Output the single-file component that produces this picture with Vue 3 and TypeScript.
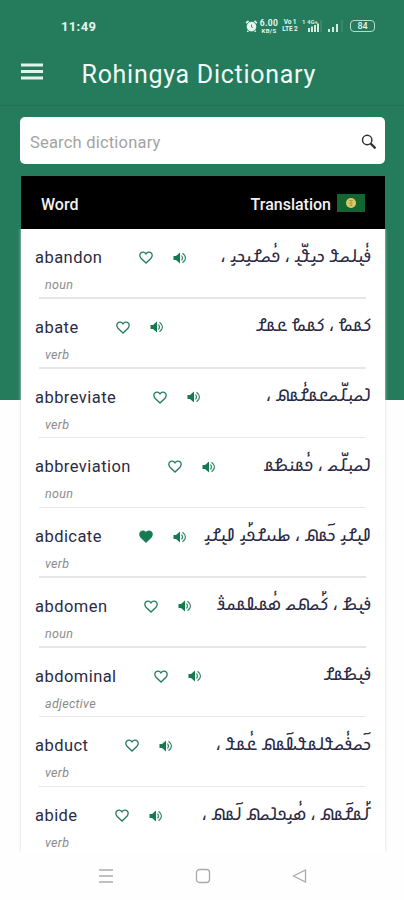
<script setup lang="ts">
interface Entry {
  word: string
  kind: string
  translation: string
  favourite?: boolean
}

const entries: Entry[] = [
  { word: 'abandon', kind: 'noun', translation: '𐴉𐴥𐴠𐴓𐴝𐴘 𐴊𐴞𐴘𐴧𐴠 ، 𐴏𐴥𐴝𐴌𐴞𐴊𐴞 ،' },
  { word: 'abate', kind: 'verb', translation: '𐴈𐴡𐴔 ، 𐴈𐴡𐴔 𐴒𐴡𐴌' },
  { word: 'abbreviate', kind: 'verb', translation: '𐴁𐴝𐴙𐴄𐴧𐴝𐴒𐴡𐴌𐴥𐴡𐴕 ،' },
  { word: 'abbreviation', kind: 'noun', translation: '𐴁𐴝𐴙𐴄𐴧𐴝 ، 𐴏𐴥𐴡𐴣𐴍𐴡' },
  { word: 'abdicate', kind: 'verb', favourite: true, translation: '𐴀𐴠𐴌𐴞 𐴊𐴦𐴡𐴕 ، 𐴋𐴟𐴌𐴏𐴤𐴞 𐴀𐴠𐴌𐴞' },
  { word: 'abdomen', kind: 'noun', translation: '𐴉𐴠𐴍 ، 𐴈𐴤𐴝𐴕𐴝 𐴇𐴥𐴡𐴎𐴡𐴔𐴜' },
  { word: 'abdominal', kind: 'adjective', translation: '𐴉𐴠𐴍𐴡𐴌' },
  { word: 'abduct', kind: 'verb', translation: '𐴊𐴦𐴝𐴉𐴥𐴝𐴘𐴓𐴡𐴘𐴎𐴦𐴡𐴕 𐴒𐴥𐴡𐴘 ،' },
  { word: 'abide', kind: 'verb', translation: '𐴄𐴤𐴡𐴌𐴦𐴡𐴕 ، 𐴇𐴥𐴞𐴏𐴁𐴝𐴕 𐴓𐴦𐴡𐴕 ،' }
]
</script>

<template>
  <main class="screen">
    <div class="status">
      <span class="clock">11:49</span>
      <div class="indicators">
        <svg class="alarm" viewBox="0 0 14 14"><circle cx="7" cy="7.7" r="5.2" /><path class="ears" d="M1.2 3.8 3.8 1.5M12.8 3.8 10.2 1.5M3.5 12l-1 1.3M10.5 12l1 1.3" /><path class="hand" d="M7 5.500v2.500l1.500 1" /></svg>
        <span class="speed"><b>6.00</b><b>KB/S</b></span>
        <span class="speed volte"><b>Vo 1</b><b>LTE 2</b></span>
        <svg class="signal one" viewBox="0 0 20 14"><text x="0" y="5">1 4G+</text><path d="M6 9h2v4H6zM9 7.500h2V13H9zM12 6h2v7h-2zM15 4.500h2V13h-2z" /><path class="dim" d="M18 1h2v12h-2z" /></svg>
        <svg class="signal two" viewBox="0 0 16 14"><path d="M0 10h2v3H0zM4 8h2v5H4zM8 5h2v8H8z" /><path class="dim" d="M13 1h2v12h-2z" /></svg>
        <span class="battery">84</span>
      </div>
    </div>

    <header class="bar">
      <svg class="menu" viewBox="0 0 22 18"><path d="M0 2h22M0 8.500h22M0 15h22" /></svg>
      <h1>Rohingya Dictionary</h1>
    </header>

    <label class="search">
      <input type="text" placeholder="Search dictionary" />
      <svg viewBox="0 0 16 16"><circle cx="6.2" cy="6" r="4.7" /><path d="m9.7 9.6 4.8 4.8" /></svg>
    </label>

    <section class="card">
      <div class="head">
        <span>Word</span>
        <span class="to">Translation
          <svg viewBox="0 0 28 18"><rect width="28" height="18" /><circle cx="14" cy="9" r="5" /><path d="M12 6.5h4M11.5 9H16M12.5 11.5h3M14 6v6" /></svg>
        </span>
      </div>
      <ul>
        <li v-for="e in entries" :key="e.word">
          <div class="line">
            <span class="word">{{ e.word }}</span>
            <svg class="heart" :class="{ on: e.favourite }" viewBox="0 0 14 13"><path d="M7 12 2 7.2C.4 5.5.5 3.1 1.8 1.9c1.6-1.4 4-.9 5.2 1 1.2-1.9 3.600-2.400 5.200-1C13.500 3.100 13.600 5.500 12 7.200Z" /></svg>
            <svg class="sound" viewBox="0 0 14 12"><path class="box" d="M.5 4H3l4-3.500v11L3 8H.5z" /><path class="wave" d="M8.500 3.500q2 2.500 0 5M9.500 1.200q6 4.800 0 9.600" /></svg>
            <span class="translation" dir="rtl" lang="rhg">{{ e.translation }}</span>
          </div>
          <em>{{ e.kind }}</em>
        </li>
      </ul>
    </section>

    <nav class="keys">
      <svg viewBox="0 0 16 16"><path d="M1 2h14M1 8h14M1 14h14" /></svg>
      <svg viewBox="0 0 16 16"><rect x="1.500" y="1.500" width="13" height="13" rx="3" /></svg>
      <svg viewBox="0 0 16 16"><path d="M14.500 2v12L2.500 8Z" /></svg>
    </nav>
  </main>
</template>

<style>
body { background: #fefefe; }
</style>

<style scoped>
* { box-sizing: border-box; }
.screen {
  width: 404px;
  height: 900px;
  overflow: hidden;
  display: flex;
  flex-direction: column;
  font-family: Roboto, "Noto Sans", sans-serif;
  background: linear-gradient(#247c5c 400px, #fefefe 400px);
}
.status {
  flex: none;
  height: 40px;
  padding: 12px 29px 0 61px;
  display: flex;
  align-items: center;
  justify-content: space-between;
  color: #e6f5ee;
}
.clock { font: 700 13px Roboto, sans-serif; letter-spacing: .35px; }
.indicators { display: flex; align-items: center; }
.alarm { width: 13px; height: 14px; margin-right: 1px; fill: #e6f5ee; }
.ears { stroke: #e6f5ee; stroke-width: 1.800; }
.hand { fill: none; stroke: #247c5c; stroke-width: .900; }
.speed { width: 20px; margin-right: 3px; display: flex; flex-direction: column; align-items: center; }
.speed b { font-size: 8.500px; line-height: 8px; letter-spacing: .3px; }
.speed b + b { font-size: 6px; line-height: 7px; }
.speed.volte { width: 16px; margin-right: 4px; }
.speed.volte b { font-size: 6.500px; line-height: 7px; white-space: nowrap; letter-spacing: -.1px; }
.signal { height: 14px; fill: #d5eae1; overflow: visible; }
.signal text { font: 700 6px Roboto, sans-serif; }
.dim { fill: #3a8769; }
.one { width: 20px; margin-right: 6px; }
.two { width: 16px; margin-right: 6px; }
.battery {
  width: 25px; height: 12px; border: 1px solid #b5dccb; border-radius: 4px;
  font: 500 9px/10px Roboto, sans-serif; text-align: center;
}
.bar {
  flex: none;
  height: 66px;
  padding: 0 21px 2px;
  display: flex;
  align-items: center;
  gap: 38.500px;
  border-bottom: 1px solid #207252;
}
.menu { flex: none; width: 22px; height: 18px; stroke: #e4f2eb; stroke-width: 3; }
h1 { margin: 7px 0 0; color: #f1faf6; font-size: 25px; font-weight: 400; letter-spacing: .72px; line-height: 30px; white-space: nowrap; }
.search {
  flex: none;
  height: 47px;
  margin: 11px 19px 0 20px;
  padding: 0 8px 0 10px;
  display: flex;
  align-items: center;
  background: #fff;
  border-radius: 5px;
}
input { flex: 1; min-width: 0; padding: 4px 0 0; border: 0; outline: 0; background: none; font: 400 16.500px Roboto, sans-serif; letter-spacing: .2px; }
input::placeholder { color: #a3a3a3; opacity: 1; }
.search svg { width: 16px; height: 16px; margin-top: 2px; fill: none; stroke: #333; stroke-width: 1.500; }
.search path { stroke-width: 2.200; }
.card {
  flex: none;
  height: 676px;
  margin: 12px 19px 0 21px;
  overflow: hidden;
  background: #fff;
  box-shadow: 0 0 3px #d8d8d8;
  clip-path: inset(53px -3px 0);
  clip-path: polygon(0 0, 100% 0, 100% 53px, calc(100% + 3px) 53px, calc(100% + 3px) 100%, -3px 100%, -3px 53px, 0 53px);
}
.head {
  height: 53px;
  padding: 3px 20px 0;
  display: flex;
  align-items: center;
  justify-content: space-between;
  background: #000;
  color: #f2f2f2;
  font-size: 16px;
  font-weight: 500;
}
.to { display: flex; align-items: center; gap: 6px; }
.to svg { width: 28px; height: 18px; margin-top: -3px; }
.to rect { fill: #11672f; }
.to circle { fill: #d9cb67; }
.to path { fill: none; stroke: #a88d35; stroke-width: .700; }
ul { margin: 0; padding: 0; list-style: none; }
li { position: relative; height: 69.750px; padding: 15px 14px 0; }
li::after { content: ""; position: absolute; left: 18px; right: 19px; bottom: 0; height: 1.500px; background: #e6e6e6; }
.line { height: 27px; display: flex; align-items: center; }
.word { color: #2b2b45; font-size: 16.500px; letter-spacing: .45px; }
.heart { flex: none; width: 14px; height: 13px; margin-left: 37px; fill: none; stroke: #227b5a; stroke-width: 1.300; }
.heart.on { fill: #147a50; }
.sound { flex: none; width: 14px; height: 12px; margin-left: 20px; }
.box { fill: #147a50; }
.wave { fill: none; stroke: #338768; stroke-width: 1.200; }
.translation {
  margin: -6px 0 0 auto;
  color: #292944;
  font: 400 17.900px "Noto Sans Hanifi Rohingya", "Noto Sans", "DejaVu Sans", sans-serif;
  white-space: nowrap;
}
em { display: block; margin: 7px 0 0 10px; color: #8c8c8c; font-size: 12.500px; line-height: 14px; letter-spacing: .3px; }
.keys {
  flex: none;
  height: 48px;
  padding: 0 97px 0 98px;
  display: flex;
  align-items: center;
  justify-content: space-between;
}
.keys svg { width: 16px; height: 16px; fill: none; stroke: #aaa; stroke-width: 1.300; }
</style>
